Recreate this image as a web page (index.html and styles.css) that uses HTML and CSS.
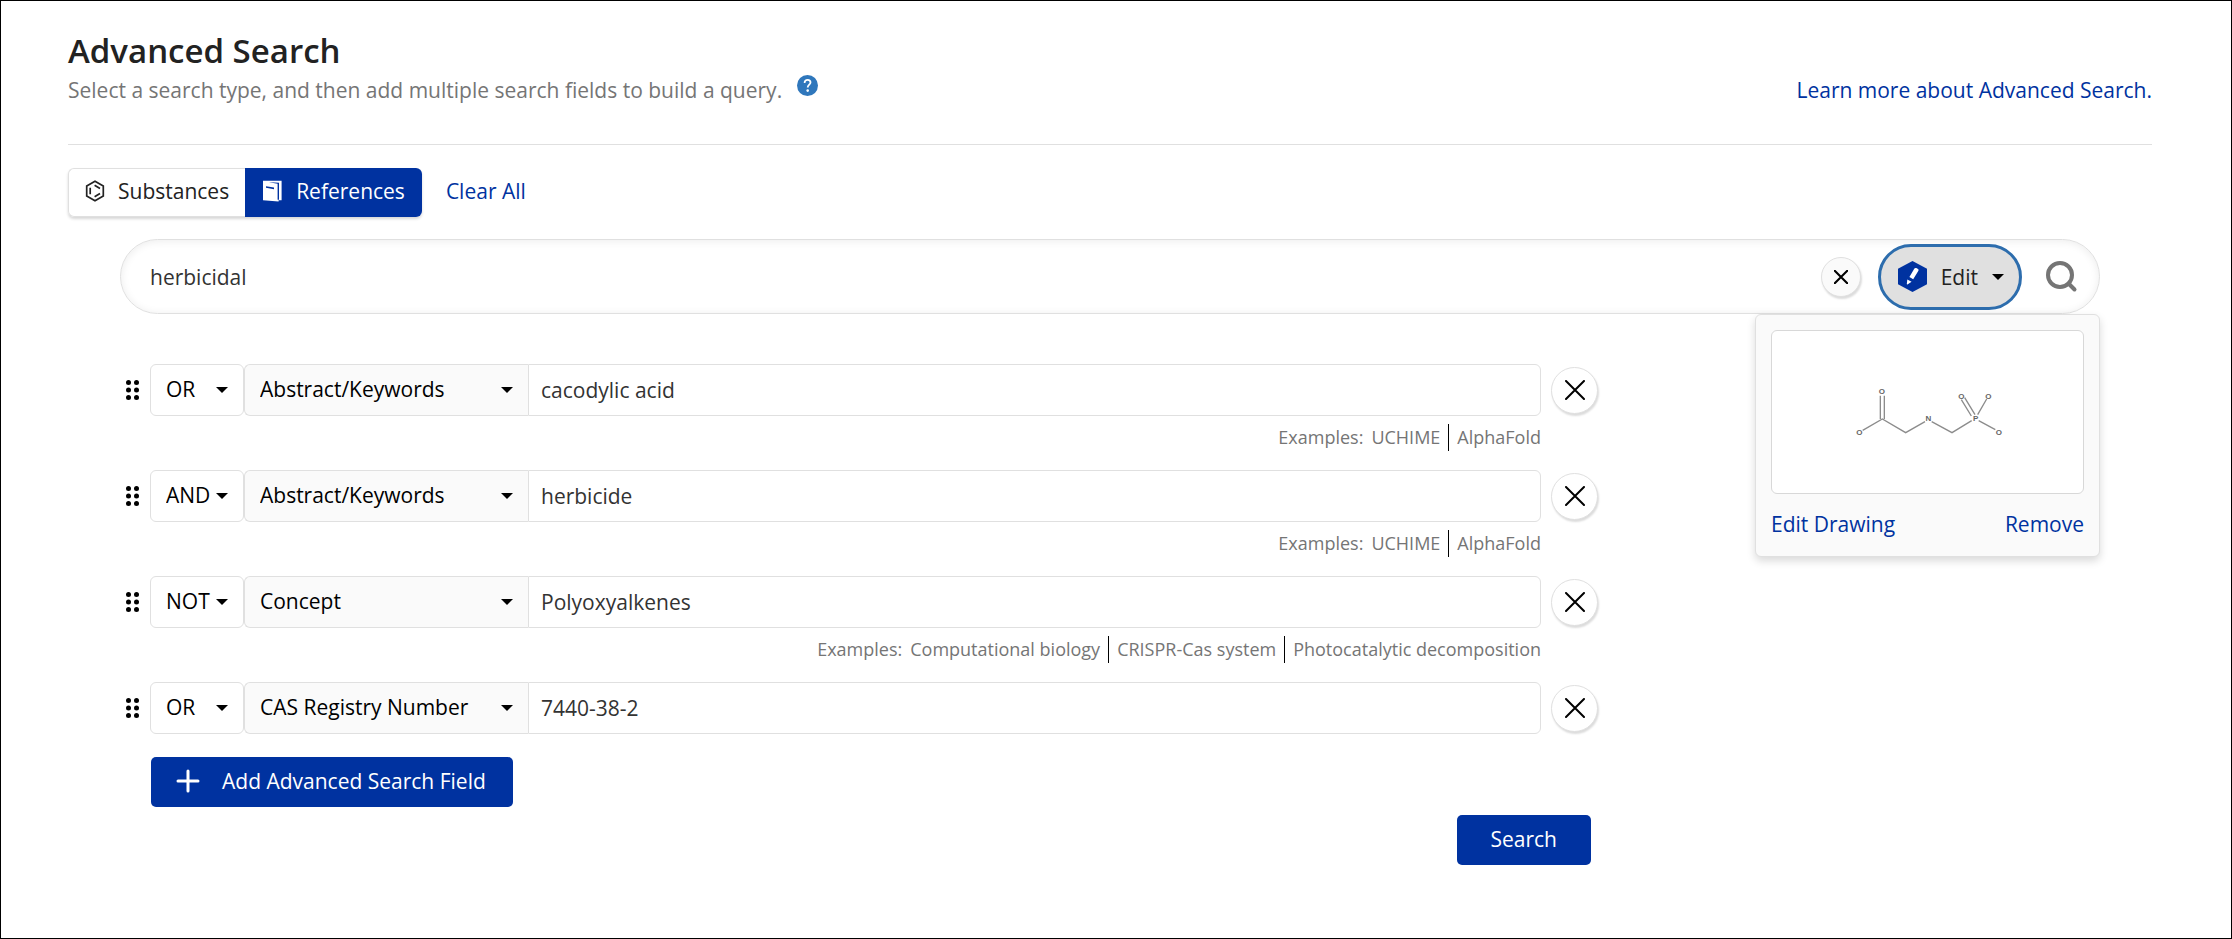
FILE: index.html
```html
<!DOCTYPE html>
<html lang="en">
<head>
<meta charset="utf-8">
<meta name="viewport" content="width=device-width, initial-scale=1">
<title>Advanced Search</title>
<link rel="stylesheet" href="styles.css">
</head>
<body>
<svg class="sprite" aria-hidden="true">
  <symbol id="caret" viewBox="0 0 12 6"><path d="M0 0H12L6 6Z"/></symbol>
  <symbol id="cross" viewBox="0 0 20 20"><path d="M1 1L19 19M19 1L1 19"/></symbol>
  <symbol id="grip" viewBox="0 0 13 20"><circle cx="2.5" cy="2.5" r="2.5"/><circle cx="10.5" cy="2.5" r="2.5"/><circle cx="2.5" cy="10" r="2.5"/><circle cx="10.5" cy="10" r="2.5"/><circle cx="2.5" cy="17.5" r="2.5"/><circle cx="10.5" cy="17.5" r="2.5"/></symbol>
</svg>
<main class="page">
  <header class="page-header">
    <div>
      <h1 class="title">Advanced Search</h1>
      <p class="subtitle">Select a search type, and then add multiple search fields to build a query.
        <button class="help" type="button" aria-label="Help">
          <svg viewBox="0 0 21 21" width="21" height="21"><circle cx="10.5" cy="10.5" r="10.5" fill="#2f77bc"/><path d="M7.6 8C7.6 5.9 8.8 4.8 10.6 4.8S13.5 5.8 13.5 7.5C13.5 9.5 10.7 9.8 10.7 12.4" fill="none" stroke="#fff" stroke-width="1.8"/><circle cx="10.7" cy="15.6" r="1.3" fill="#fff"/></svg>
        </button>
      </p>
    </div>
    <a class="link" href="#learn">Learn more about Advanced Search.</a>
  </header>

  <div class="types">
    <div class="toggle">
      <button class="toggle-item" type="button">
        <svg viewBox="0 0 20 22" width="20" height="22" fill="none" stroke="#222" stroke-width="1.7"><path d="M10 1.3L18.3 6V16L10 20.7L1.7 16V6Z"/><path d="M5.2 7.8V14.2M9.6 5.2L15 8.4M9.6 16.8L15 13.6"/></svg>
        Substances
      </button>
      <button class="toggle-item toggle-item-active" type="button" aria-pressed="true">
        <svg viewBox="0 0 20 22" width="20" height="22"><path d="M1 .8H19.6V20.2H16.6V21.6L1 20.2Z" fill="#fff"/><path d="M7 2.2L15.6 3.8V19.8H17V2.8L8 2.2ZM4 6.2L12 7.6V9.2L4 7.8Z" fill="#0032a0"/></svg>
        References
      </button>
    </div>
    <button class="link clear-all" type="button">Clear All</button>
  </div>

  <form class="builder">
    <div class="searchbar">
      <input class="searchbar-input" type="text" aria-label="Search query" value="herbicidal">
      <button class="round round-small" type="button" aria-label="Clear"><svg class="cross" width="14" height="14"><use href="#cross"/></svg></button>
      <button class="edit" type="button" aria-expanded="true">
        <svg viewBox="0 0 29 31" width="29" height="31"><path d="M14.5 0L29 7.7V23.3L14.5 31L0 23.3V7.7Z" fill="#0032a0"/><path d="M16.4 7.6Q17.2 6.5 18.3 7.1L20 8.1Q21 8.8 20.4 9.8L15.2 18.2L11.4 16.1ZM9.3 18.4L13.6 20.8L9.4 23.4Q8.9 23.5 8.8 23Z" fill="#fff"/></svg>
        Edit
        <svg class="caret" width="12" height="6"><use href="#caret"/></svg>
      </button>
      <button class="submit-icon" type="submit" aria-label="Run search">
        <svg viewBox="0 0 32 32" width="32" height="32" fill="none" stroke="#757575" stroke-width="4"><circle cx="14" cy="14" r="12"/><path d="M22.5 22.5L28.5 28.5" stroke-linecap="round"/></svg>
      </button>
      <div class="panel">
        <div class="drawing">
          <svg viewBox="337 260 450 150" width="150" height="50" role="img" aria-label="Glyphosate structure">
            <g stroke="#8c8c8c" stroke-width="4" fill="none"><path d="M366 390L425 356L495 397L553 364M573 364L634 397L693 361M419 356V286M431 356V286M714 361L764 388M711 343L738 296M692 347L662 298M703 343L672 292"/></g>
            <g class="atoms"><text x="356" y="404">O</text><text x="424" y="282">O</text><text x="563" y="363">N</text><text x="705" y="363">P</text><text x="662" y="296">O</text><text x="743" y="296">O</text><text x="775" y="404">O</text></g>
          </svg>
        </div>
        <div class="panel-actions">
          <button class="link" type="button">Edit Drawing</button>
          <button class="link" type="button">Remove</button>
        </div>
      </div>
    </div>

    <div class="fields">
      <div class="field">
        <svg class="grip" width="13" height="20"><use href="#grip"/></svg>
        <div class="field-line">
          <div class="pick pick-op"><select aria-label="Operator 1"><option>OR</option><option>AND</option><option>NOT</option></select><svg class="caret" width="12" height="6"><use href="#caret"/></svg></div>
          <div class="pick pick-type"><select aria-label="Field type 1"><option>Abstract/Keywords</option></select><svg class="caret" width="12" height="6"><use href="#caret"/></svg></div>
          <input class="value" type="text" aria-label="Value 1" value="cacodylic acid">
        </div>
        <button class="round" type="button" aria-label="Remove field 1"><svg class="cross" width="20" height="20"><use href="#cross"/></svg></button>
        <p class="examples"><span class="examples-label">Examples:</span><span class="example">UCHIME</span><span class="example">AlphaFold</span></p>
      </div>
      <div class="field">
        <svg class="grip" width="13" height="20"><use href="#grip"/></svg>
        <div class="field-line">
          <div class="pick pick-op"><select aria-label="Operator 2"><option>AND</option><option>OR</option><option>NOT</option></select><svg class="caret" width="12" height="6"><use href="#caret"/></svg></div>
          <div class="pick pick-type"><select aria-label="Field type 2"><option>Abstract/Keywords</option></select><svg class="caret" width="12" height="6"><use href="#caret"/></svg></div>
          <input class="value" type="text" aria-label="Value 2" value="herbicide">
        </div>
        <button class="round" type="button" aria-label="Remove field 2"><svg class="cross" width="20" height="20"><use href="#cross"/></svg></button>
        <p class="examples"><span class="examples-label">Examples:</span><span class="example">UCHIME</span><span class="example">AlphaFold</span></p>
      </div>
      <div class="field">
        <svg class="grip" width="13" height="20"><use href="#grip"/></svg>
        <div class="field-line">
          <div class="pick pick-op"><select aria-label="Operator 3"><option>NOT</option><option>OR</option><option>AND</option></select><svg class="caret" width="12" height="6"><use href="#caret"/></svg></div>
          <div class="pick pick-type"><select aria-label="Field type 3"><option>Concept</option></select><svg class="caret" width="12" height="6"><use href="#caret"/></svg></div>
          <input class="value" type="text" aria-label="Value 3" value="Polyoxyalkenes">
        </div>
        <button class="round" type="button" aria-label="Remove field 3"><svg class="cross" width="20" height="20"><use href="#cross"/></svg></button>
        <p class="examples"><span class="examples-label">Examples:</span><span class="example">Computational biology</span><span class="example">CRISPR-Cas system</span><span class="example">Photocatalytic decomposition</span></p>
      </div>
      <div class="field">
        <svg class="grip" width="13" height="20"><use href="#grip"/></svg>
        <div class="field-line">
          <div class="pick pick-op"><select aria-label="Operator 4"><option>OR</option><option>AND</option><option>NOT</option></select><svg class="caret" width="12" height="6"><use href="#caret"/></svg></div>
          <div class="pick pick-type"><select aria-label="Field type 4"><option>CAS Registry Number</option></select><svg class="caret" width="12" height="6"><use href="#caret"/></svg></div>
          <input class="value" type="text" aria-label="Value 4" value="7440-38-2">
        </div>
        <button class="round" type="button" aria-label="Remove field 4"><svg class="cross" width="20" height="20"><use href="#cross"/></svg></button>
      </div>
      <div class="actions">
        <button class="primary primary-add" type="button">
          <svg viewBox="0 0 24 24" width="24" height="24" stroke="#fff" stroke-width="3" stroke-linecap="round"><path d="M12 2V22M2 12H22"/></svg>
          Add Advanced Search Field
        </button>
        <button class="primary primary-search" type="submit">Search</button>
      </div>
    </div>
  </form>
</main>
</body>
</html>
```
FILE: styles.css
```css
* { box-sizing: border-box; }

body {
  margin: 0;
  background: #fff;
  color: #222;
  font-family: "Open Sans", "Noto Sans", sans-serif;
  font-size: 21px;
  line-height: 28px;
}

button, input, select { font: inherit; color: inherit; margin: 0; }
button { cursor: pointer; padding: 0; border: 0; background: none; }
h1, p { margin: 0; }
svg { display: block; flex: none; }
.sprite { display: none; }

.page {
  min-height: 100vh;
  border: 1px solid #000;
  padding: 28px 79px 40px 67px;
}

.page-header {
  display: flex;
  justify-content: space-between;
  align-items: flex-end;
  padding-bottom: 40px;
  border-bottom: 1px solid #e0e0e0;
}
.title { font-size: 33px; line-height: 44px; font-weight: 600; }
.subtitle { display: flex; align-items: flex-end; gap: 15px; color: #757575; height: 31px; }
.help { margin-bottom: 8px; }
.link { color: #0032a0; text-decoration: none; }

.types { display: flex; align-items: center; gap: 24px; margin-top: 23px; }
.toggle { display: flex; border-radius: 6px; box-shadow: 0 2px 3px rgba(0, 0, 0, .16); }
.toggle-item {
  display: flex;
  align-items: center;
  gap: 13px;
  height: 49px;
  padding: 0 16px 3px;
  border: 1px solid #e0e0e0;
  border-right: 0;
  border-radius: 6px 0 0 6px;
  background: #fff;
}
.toggle-item-active {
  gap: 14px;
  padding: 0 17px 3px;
  border: 0;
  border-radius: 0 6px 6px 0;
  background: #0032a0;
  color: #fff;
}
.clear-all { padding-bottom: 3px; }

.builder { padding: 22px 52px 0; }
.searchbar {
  position: relative;
  display: flex;
  align-items: center;
  height: 75px;
  padding: 0 21px 0 29px;
  border: 1px solid #e0e0e0;
  border-radius: 38px;
  box-shadow: inset 0 1px 8px rgba(0, 0, 0, .08);
}
.searchbar-input { flex: 1; min-width: 0; padding: 0; border: 0; outline: 0; background: none; color: #333; }

.round {
  display: grid;
  place-items: center;
  width: 47px;
  height: 47px;
  border: 1px solid #e0e0e0;
  border-radius: 50%;
  background: #fff;
  box-shadow: 1px 2px 2px rgba(0, 0, 0, .14);
}
.round-small { width: 40px; height: 40px; background: #fafafa; }
.cross { stroke: #000; stroke-width: 2; stroke-linecap: round; }
.round-small .cross { stroke-width: 3; }
.caret { fill: #000; }

.edit {
  display: flex;
  align-items: center;
  gap: 14px;
  height: 66px;
  margin: 0 24px 0 17px;
  padding: 0 15px 0 17px;
  border: 3px solid #2d6dad;
  border-radius: 33px;
  background: #e0e0e0;
}

.panel {
  position: absolute;
  z-index: 1;
  top: calc(100% + 1px);
  right: -1px;
  width: 345px;
  padding: 15px 15px 0;
  border: 1px solid #e0e0e0;
  border-radius: 6px;
  background: #fafafa;
  box-shadow: 0 4px 8px rgba(0, 0, 0, .15);
}
.drawing {
  display: grid;
  place-items: center;
  height: 164px;
  border: 1px solid #d8d8d8;
  border-radius: 6px;
  background: #fff;
}
.atoms { font-size: 24px; text-anchor: middle; fill: #666; font-family: "Liberation Sans", sans-serif; font-weight: bold; }
.panel-actions { display: flex; justify-content: space-between; padding: 16px 0 18px; }

.fields { max-width: 1478px; padding-top: 50px; }
.field {
  display: grid;
  grid-template-columns: 14px 1fr 47px;
  column-gap: 10px;
  row-gap: 8px;
  align-items: center;
  padding: 0 0 19px 6px;
}
.field:nth-last-child(2) { padding-bottom: 23px; }
.grip { fill: #000; }
.field-line { display: flex; height: 52px; }
.pick { display: grid; align-items: center; }
.pick select {
  grid-area: 1 / 1;
  width: 100%;
  height: 52px;
  padding: 0 16px 2px 15px;
  border: 1px solid #e0e0e0;
  border-radius: 6px;
  background: #fff;
  color: #000;
  appearance: none;
}
.pick .caret { grid-area: 1 / 1; justify-self: end; margin-right: 16px; pointer-events: none; }
.pick-op { width: 94px; }
.pick-type { width: 284px; }
.pick-type select { border-right: 0; border-radius: 6px 0 0 6px; background: #fafafa; }
.pick-type .caret { margin-right: 15px; }
.value {
  flex: 1;
  min-width: 0;
  padding: 0 12px;
  border: 1px solid #e0e0e0;
  border-radius: 0 6px 6px 0;
  background: #fff;
  color: #333;
}

.examples {
  grid-column: 2;
  display: flex;
  justify-content: flex-end;
  color: #757575;
  font-size: 18px;
  line-height: 27px;
}
.examples-label { margin-right: 8px; }
.example + .example { margin-left: 8px; padding-left: 8px; border-left: 1px solid #000; }

.actions { display: flex; flex-direction: column; align-items: flex-start; gap: 8px; padding: 0 7px 0 31px; }
.primary {
  height: 50px;
  border-radius: 5px;
  background: #0032a0;
  color: #fff;
}
.primary-add { display: flex; align-items: center; gap: 22px; padding: 0 27px 3px 25px; }
.primary-search { align-self: flex-end; padding: 0 34px 2px; }
```
